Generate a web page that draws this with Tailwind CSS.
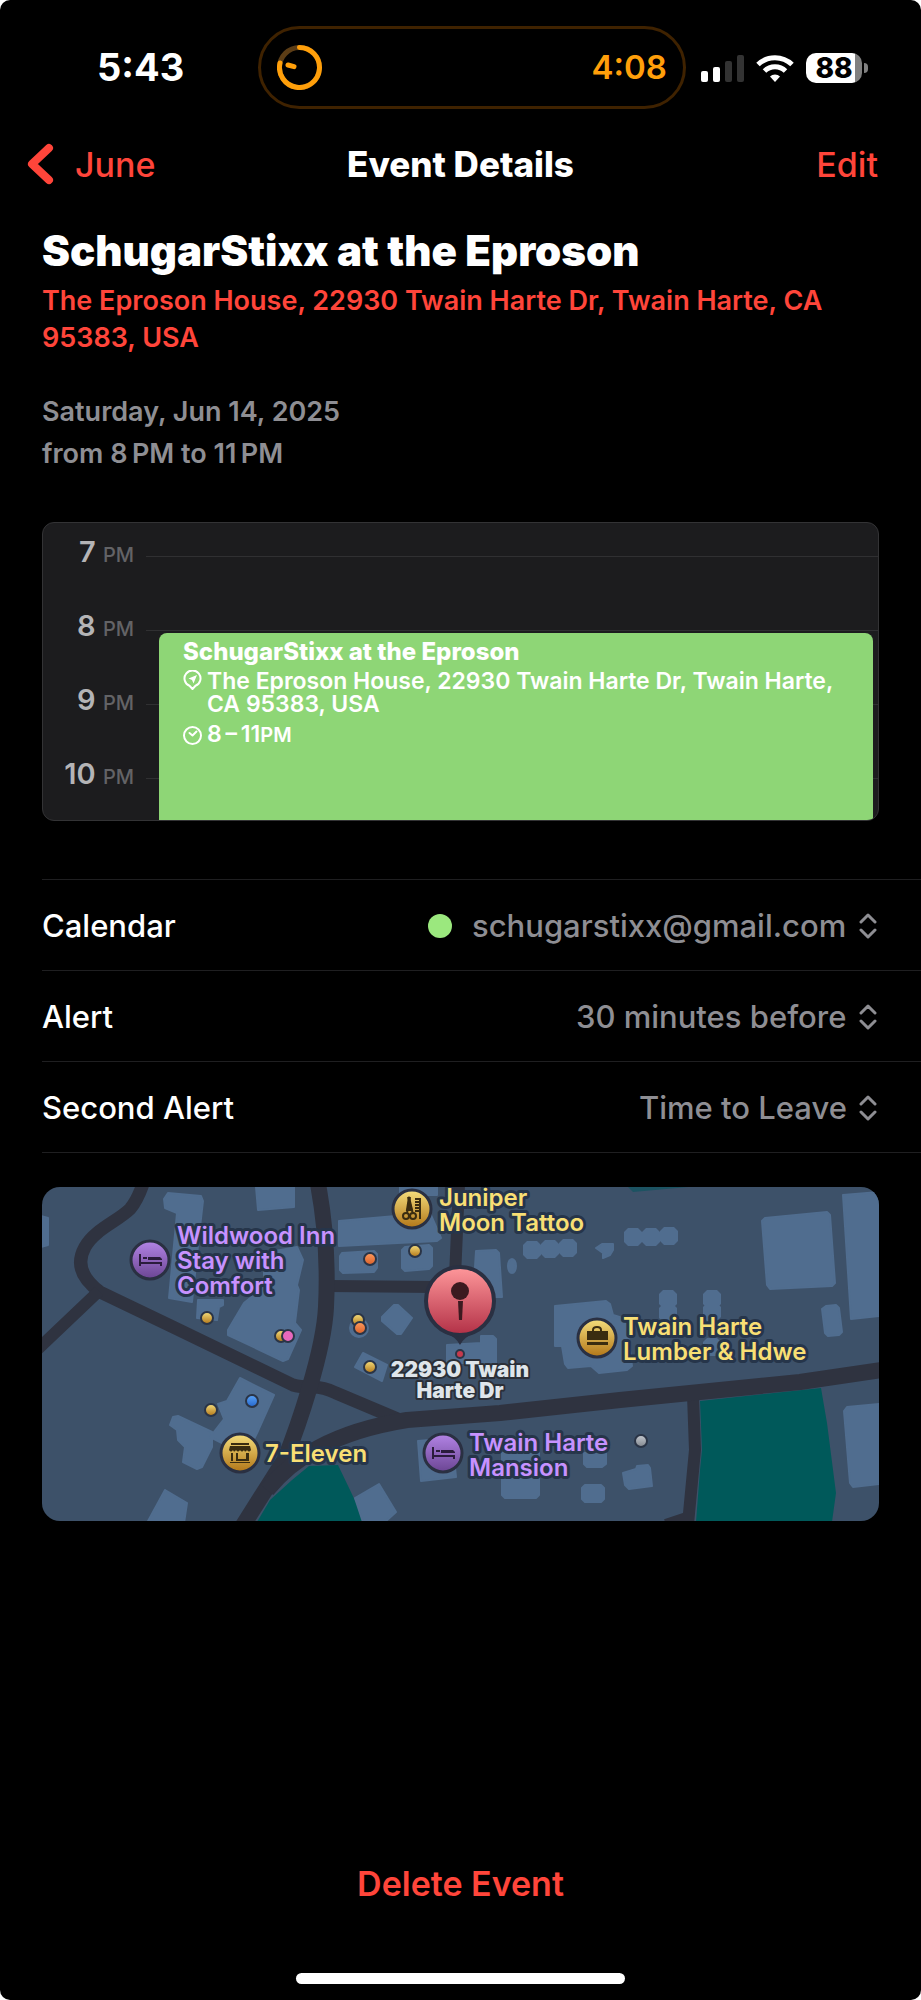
<!DOCTYPE html>
<html lang="en">
<head>
  <meta charset="utf-8">
  <meta name="viewport" content="width=device-width, initial-scale=1">
  <title>Event Details</title>
  <script src="https://cdn.jsdelivr.net/npm/@tailwindcss/browser@4"></script>
</head>
<body class="bg-white font-['Inter',sans-serif]">
<div class="flex min-h-screen flex-col rounded-[10px] bg-black pt-[26px] pb-4 text-white">

  <!-- Status bar -->
  <div class="grid h-[83px] grid-cols-[258px_1fr_235px] items-center">
    <span class="pl-[97px] text-[38px] font-bold">5:43</span>
    <div class="flex h-full items-center justify-between rounded-full border-3 border-[#3f2200] pr-4 pl-4 text-[#ff9f0a]">
      <svg class="size-[45px]" viewBox="0 0 45 45" fill="none" stroke="#ff9f0a" stroke-width="5" stroke-linecap="round">
        <circle cx="22.500" cy="22.500" r="20" stroke="#5c3d16"/>
        <path d="M22.500 2.500A20 20 0 1 1 3 18"/>
        <path d="M11 20l6 1.600"/>
      </svg>
      <span class="text-[33px] font-semibold">4:08</span>
    </div>
    <div class="flex items-center gap-3 pl-[15px]">
      <svg class="h-[28px] w-[43px]" viewBox="0 0 43 28">
        <rect x="0" y="17" width="7" height="11" rx="2" fill="#fff"/>
        <rect x="12" y="13" width="7" height="15" rx="2" fill="#fff"/>
        <rect x="24" y="7" width="7" height="21" rx="2" fill="#333"/>
        <rect x="36" y="1" width="7" height="27" rx="2" fill="#333"/>
      </svg>
      <svg class="h-[28px] w-[38px]" viewBox="0 0 38 28" fill="none" stroke="#fff" stroke-width="5">
        <path d="M2 10.500a24.500 24.500 0 0 1 34 0"/>
        <path d="M8.500 17a15 15 0 0 1 21 0"/>
        <path d="M19 28l-5-5.500a7 7 0 0 1 10 0z" fill="#fff" stroke="none"/>
      </svg>
      <div class="flex items-center gap-[2px]">
        <div class="flex h-[30px] w-[56px] items-center justify-center rounded-[10px] bg-linear-to-r from-white from-88% to-[#808080] to-88% text-[28px] font-extrabold text-black">88</div>
        <div class="h-[10px] w-[4px] rounded-r-full bg-[#808080]"></div>
      </div>
    </div>
  </div>

  <!-- Navigation -->
  <header class="grid h-[110px] grid-cols-[1fr_auto_1fr] items-center px-[27px] text-[34px]">
    <a href="#" class="flex items-center gap-[21px] font-medium text-[#ff453a]">
      <svg class="h-[42px] w-[27px]" viewBox="0 0 27 42" fill="none" stroke="currentColor" stroke-width="8" stroke-linecap="round" stroke-linejoin="round"><path d="M22 5L5 21l17 16"/></svg>
      June
    </a>
    <h1 class="text-[35px] font-extrabold">Event Details</h1>
    <button type="button" class="justify-self-end pr-4 font-medium text-[#ff453a]">Edit</button>
  </header>

  <main class="flex flex-1 flex-col pl-[42px]">
    <section class="mt-2 pr-[42px]">
      <h2 class="text-[42px] leading-[48px] font-black">SchugarStixx at the Eproson</h2>
      <a href="#" class="mt-[7px] block text-[27px] leading-[37px] font-semibold text-[#ff453a]">The Eproson House, 22930 Twain Harte Dr, Twain Harte, CA 95383, USA</a>
      <p class="mt-[35px] text-[27px] leading-[42px] font-semibold text-[#8e8e93]">Saturday, Jun 14, 2025<br>from 8&#8201;PM to 11&#8201;PM</p>
    </section>

    <!-- Day preview -->
    <section class="relative mt-[47px] mr-[42px] h-[299px] overflow-hidden rounded-xl border border-[#333335] bg-[#1c1c1e]">
      <ul class="pt-[11px] text-[29px] leading-[36px] font-semibold text-[#b4b4b6]">
        <li class="flex h-[74px] items-start gap-3">
          <span class="w-[91px] text-right">7 <small class="text-[20px] font-medium text-[#636366]">PM</small></span>
          <span class="mt-[22px] flex-1 border-t border-[#303032]"></span>
        </li>
        <li class="flex h-[74px] items-start gap-3">
          <span class="w-[91px] text-right">8 <small class="text-[20px] font-medium text-[#636366]">PM</small></span>
          <span class="mt-[22px] flex-1 border-t border-[#303032]"></span>
        </li>
        <li class="flex h-[74px] items-start gap-3">
          <span class="w-[91px] text-right">9 <small class="text-[20px] font-medium text-[#636366]">PM</small></span>
          <span class="mt-[22px] flex-1 border-t border-[#303032]"></span>
        </li>
        <li class="flex h-[74px] items-start gap-3">
          <span class="w-[91px] text-right">10 <small class="text-[20px] font-medium text-[#636366]">PM</small></span>
          <span class="mt-[22px] flex-1 border-t border-[#303032]"></span>
        </li>
      </ul>
      <div class="absolute top-[110px] right-[5px] bottom-0 left-[116px] rounded-t-lg bg-[#8ed676] pt-[6px] pl-6 text-[23px] leading-[23px] font-semibold">
        <p class="text-[24px] leading-[26px] font-extrabold">SchugarStixx at the Eproson</p>
        <div class="mt-[5px] flex gap-[5px]">
          <svg class="h-[20px] w-[19px] shrink-0" viewBox="0 0 19 20" fill="none" stroke="#fff" stroke-width="2" stroke-linejoin="round">
            <path d="M9.500 19l-3-3.200A8 8 0 1 1 12.500 15.800z"/>
            <path d="M14 5l-3.500 8.500-1.500-3.500-3.500-1.500z" fill="#fff" stroke="none"/>
          </svg>
          <p>The Eproson House, 22930 Twain Harte Dr, Twain Harte,<br>CA 95383, USA</p>
        </div>
        <div class="mt-[7px] flex items-center gap-[5px]">
          <svg class="size-[19px]" viewBox="0 0 19 19" fill="none" stroke="#fff" stroke-width="2" stroke-linecap="round" stroke-linejoin="round"><circle cx="9.500" cy="9.500" r="8.500"/><path d="M6.500 7l3 2.500 4-4"/></svg>
          <p>8&#8201;–&#8201;11<span class="text-[20px]">PM</span></p>
        </div>
      </div>
    </section>

    <!-- Settings -->
    <form class="mt-[58px] border-t border-[#1f1f21] text-[31px]">
      <div class="flex h-[91px] items-center justify-between border-b border-[#1f1f21] pt-[2px] pr-[44px] font-medium">
        <label for="calendar">Calendar</label>
        <div class="flex items-center text-[#8e8e93]">
          <span class="mr-5 size-6 rounded-full bg-[#9be87e]"></span>
          <select id="calendar" class="appearance-none bg-black"><option>schugarstixx@gmail.com</option></select>
          <svg class="ml-3 h-[26px] w-[18px]" viewBox="1 0 18 26" fill="none" stroke="currentColor" stroke-width="3" stroke-linecap="round" stroke-linejoin="round"><path d="M3 9l7-7 7 7M3 17l7 7 7-7"/></svg>
        </div>
      </div>
      <div class="flex h-[91px] items-center justify-between border-b border-[#1f1f21] pt-[2px] pr-[44px] font-medium">
        <label for="alert">Alert</label>
        <div class="flex items-center text-[#8e8e93]">
          <select id="alert" class="appearance-none bg-black"><option>30 minutes before</option></select>
          <svg class="ml-3 h-[26px] w-[18px]" viewBox="1 0 18 26" fill="none" stroke="currentColor" stroke-width="3" stroke-linecap="round" stroke-linejoin="round"><path d="M3 9l7-7 7 7M3 17l7 7 7-7"/></svg>
        </div>
      </div>
      <div class="flex h-[91px] items-center justify-between border-b border-[#1f1f21] pt-[2px] pr-[44px] font-medium">
        <label for="second-alert">Second Alert</label>
        <div class="flex items-center text-[#8e8e93]">
          <select id="second-alert" class="appearance-none bg-black"><option>Time to Leave</option></select>
          <svg class="ml-3 h-[26px] w-[18px]" viewBox="1 0 18 26" fill="none" stroke="currentColor" stroke-width="3" stroke-linecap="round" stroke-linejoin="round"><path d="M3 9l7-7 7 7M3 17l7 7 7-7"/></svg>
        </div>
      </div>
    </form>

    <!-- Map -->
    <section class="mt-[34px] mr-[42px] overflow-hidden rounded-[18px] bg-[#3d5169]">
      <svg class="block w-full" viewBox="0 0 837 334">
        <defs>
          <linearGradient id="gold" x2="0" y2="1"><stop stop-color="#f5de7c"/><stop offset="1" stop-color="#b27618"/></linearGradient>
          <linearGradient id="purple" x2="0" y2="1"><stop stop-color="#b384e6"/><stop offset="1" stop-color="#6b4593"/></linearGradient>
          <linearGradient id="red" x2="0" y2="1"><stop stop-color="#ff989b"/><stop offset="1" stop-color="#b23046"/></linearGradient>
          <linearGradient id="orange" x2="0" y2="1"><stop stop-color="#ff9a5c"/><stop offset="1" stop-color="#d8602a"/></linearGradient>
          <linearGradient id="blue" x2="0" y2="1"><stop stop-color="#5ba4f5"/><stop offset="1" stop-color="#2566cc"/></linearGradient>
          <linearGradient id="gray" x2="0" y2="1"><stop stop-color="#c3c8cf"/><stop offset="1" stop-color="#82878e"/></linearGradient>
          <g id="bed" fill="#2b1c3c">
            <path d="M-11-6h2v8h21v4h-2v-2H-9v2h-2z"/>
            <path d="M-7-3h4v2h-4zM-2-3h12l2 2v1H-2z"/>
          </g>
          <path id="oct" d="M-5-9H5L9-5V5L5 9H-5L-9 5V-5z"/>
        </defs>

        <!-- parks -->
        <path fill="#00595a" d="M215 335l13-22 22-20 17-14 29-1 12 25 15 32zM658 214l121-13 6 35 9 70-4 29H654l4-52 2-20z"/>
        <path fill="#1c5362" d="M586 0l5 5 55-5z"/>

        <!-- buildings -->
        <g fill="#506d8f" stroke="#506d8f" stroke-width="2" stroke-linejoin="round">
          <path d="M126 6l33 3 2 5-3 26-8 75-23-4 8-85-12-5-1-9zM214 0h38v20l-36 3zM-1 29l7 2v27l-7 2zM156 113h25v5l-4 2-2 13-20-2z"/>
          <path d="M255 60l6 13-6 25 2 5-4 33 6 7-13 29-5 2-55-26v-5l16-27 20-16V66z"/>
          <path d="M198 191l34 17-17 38-7 14-28-4-12-6 14-18-6-15 9-3zM131 230l5-1 34 16v15l-10 20-5 2-14-7 2-15-7-7-1-10-7-5zM123 303l22 13-3 20h-37z"/>
          <path d="M297 34l91-8 11 25-4 3-98 5zM358 0h37v8h-37zM300 66l32-2 3 3v14l-3 4-31 1-3-3V69zM363 60l24-2 3 3v18l-3 3-24 2-3-3V63zM434 64l20-1 3 3 3 44h-15l-12-30z"/>
          <path d="M554 61l6-4h11v6l-3 5-7 3v-5zM340 130l12-12h4l14 13-11 16h-4l-15-13zM313 180l8-14 24 12-5 16zM405 158l34-2v-7h12l3 3v24h-49z"/>
          <path d="M513 119l51-5 4 3 3 11 13 4 6 47-5 4-28 3-8-7-23 2-3-4-3-18h-7z"/>
          <path d="M376 254l34-3 4 39-35 4zM460 266h37v42l-3 3h-31l-3-3zM542 266h22v11l-4 3h-15l-3-3zM543 298h16l3 3v11l-3 3h-16l-3-3v-11zM313 311l24-14 17 28-11 10h-22z"/>
          <path d="M723 31l62-6 3 3 5 68-3 3-62 3-3-4-5-64zM801 8l37-3v124l-29 3zM784 119l10-1 3 3 3 24-3 3-11 1-3-3-3-24zM805 220l33-3v80l-27 3-3-4-6-72zM581 286l13-4 1-3 11-1 2 3 2 18-23 3-4-4z"/>
          <ellipse cx="470" cy="79" rx="4" ry="7"/>
          <circle cx="317" cy="141" r="9"/>
        </g>
        <g fill="#506d8f">
          <use href="#oct" x="490" y="63"/><use href="#oct" x="508" y="62"/><use href="#oct" x="526" y="61"/>
          <use href="#oct" x="591" y="50"/><use href="#oct" x="609" y="50"/><use href="#oct" x="627" y="49"/>
          <use href="#oct" x="626" y="112"/><use href="#oct" x="626" y="126"/>
          <use href="#oct" x="670" y="112"/><use href="#oct" x="670" y="125"/><use href="#oct" x="670" y="160"/>
        </g>

        <!-- roads -->
        <g fill="none" stroke="#2f3340" stroke-width="12" stroke-linejoin="round">
          <path d="M101-3Q95 14 88 22C76 34 52 43 43 60C34 76 39 91 58 105L131 140L251 198Q257 200 270 200Q282 200 294 206L358 233" stroke-width="13"/>
          <path d="M57 104L-4 162M288 99l105 1M417-2l-4 92M651 208l2 55-7 74M648 330l-24 8"/>
          <path stroke-width="16" d="M276-3C284 40 286 80 284 120C282 165 255 242 243 272L224 302L200 340"/>
          <path stroke-width="16" d="M225 303C250 272 290 245 365 233L458 226L578 213L658 205L758 195L840 183"/>
        </g>

        <!-- small dots -->
        <g stroke="#2a3446" stroke-width="2">
          <circle cx="165" cy="131" r="6" fill="url(#gold)"/>
          <circle cx="239" cy="149" r="6" fill="url(#gold)"/>
          <circle cx="246" cy="149" r="6" fill="#e868bd"/>
          <circle cx="210" cy="214" r="6" fill="url(#blue)"/>
          <circle cx="169" cy="223" r="6" fill="url(#gold)"/>
          <circle cx="328" cy="72" r="6" fill="url(#orange)"/>
          <circle cx="373" cy="64" r="6" fill="url(#gold)"/>
          <circle cx="316" cy="133" r="6" fill="url(#gold)"/>
          <circle cx="318" cy="141" r="6" fill="url(#orange)"/>
          <circle cx="328" cy="180" r="6" fill="url(#gold)"/>
          <circle cx="599" cy="254" r="6" fill="url(#gray)"/>
          <circle cx="418" cy="167" r="4" fill="#c63a4d"/>
        </g>

        <!-- place pins -->
        <g stroke="#2a3042" stroke-width="3">
          <circle cx="108" cy="73" r="19" fill="url(#purple)"/>
          <circle cx="401" cy="266" r="19" fill="url(#purple)"/>
          <circle cx="198" cy="266" r="19" fill="url(#gold)"/>
          <circle cx="370" cy="22" r="19" fill="url(#gold)"/>
          <circle cx="555" cy="151" r="19" fill="url(#gold)"/>
        </g>
        <use href="#bed" x="108" y="73"/>
        <use href="#bed" x="401" y="266"/>
        <!-- store -->
        <g fill="#3a2c10">
          <path d="M189 256h18v2h-18zM188 259h20l1 4q-2 3-4 0-2 3-3 0-2 3-4 0-2 3-4 0-2 3-3 0-2 3-4 0zM189 266h2v8h-2zM205 266h2v8h-2zM188 275h20v1h-20z"/>
          <path d="M194 266h2v6h8v-6h2v8h-12z"/>
        </g>
        <!-- scissors and comb -->
        <g fill="none" stroke="#3a2c10" stroke-width="2">
          <path d="M368 10l-3 16M366 10l5 17M378 11v21M378 12h-5M378 15h-5M378 18h-5M378 21h-5M378 24h-5"/>
          <circle cx="364" cy="29" r="3"/><circle cx="371" cy="29" r="3"/>
          <path fill="#3a2c10" d="M367 10l3 13h-5z"/>
        </g>
        <!-- briefcase -->
        <g fill="#3a2c10">
          <path d="M545 144h21v9h-21zM545 155h21v3h-21z"/>
          <path d="M551 145v-2q0-3 4-3t4 3v2" fill="none" stroke="#3a2c10" stroke-width="2"/>
        </g>
        <!-- event pin -->
        <path fill="#2a3042" d="M405 147q9 3 13 11 4-8 13-11z"/>
        <circle cx="418" cy="114" r="34" fill="url(#red)" stroke="#2a3042" stroke-width="4"/>
        <circle cx="418" cy="104" r="9" fill="#3c1a20"/>
        <path fill="#3c1a20" d="M416 114h5l-1 19h-3z"/>

        <!-- labels -->
        <g font-size="24" font-weight="600" stroke="#26354a" stroke-width="6" stroke-linejoin="round" paint-order="stroke">
          <g fill="#c792ff">
            <text x="135" y="57">Wildwood Inn</text><text x="135" y="82">Stay with</text><text x="135" y="107">Comfort</text>
            <text x="427" y="264">Twain Harte</text><text x="427" y="289">Mansion</text>
          </g>
          <g fill="#f8df74">
            <text x="397" y="19">Juniper</text><text x="397" y="44">Moon Tattoo</text>
            <text x="223" y="275">7-Eleven</text>
            <text x="581" y="148">Twain Harte</text><text x="581" y="173">Lumber &amp; Hdwe</text>
          </g>
          <g font-size="21" font-weight="900" fill="#dfe5ea" stroke="#2b2f38" text-anchor="middle" stroke-width="4">
            <text x="418" y="190">22930 Twain</text><text x="418" y="211">Harte Dr</text>
          </g>
        </g>
      </svg>
    </section>
  </main>

  <button type="button" class="self-center text-[34px] leading-[48px] font-semibold text-[#ff453a]">Delete Event</button>
  <div class="mt-[65px] h-[11px] w-[329px] self-center rounded-full bg-white"></div>
</div>
</body>
</html>
